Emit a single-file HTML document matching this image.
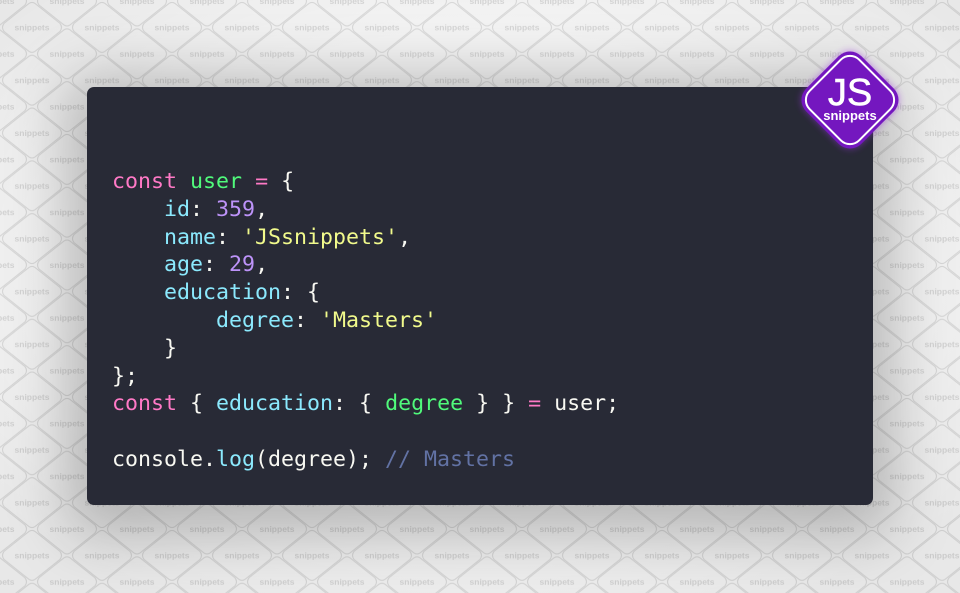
<!DOCTYPE html>
<html><head><meta charset="utf-8"><style>
html,body{margin:0;padding:0;width:960px;height:593px;overflow:hidden;background:#f2f2f2;}
#bg{position:absolute;left:0;top:0;}
.card{position:absolute;left:87px;top:87px;width:786px;height:418px;background:#282a36;border-radius:7px;box-shadow:0 10px 60px 20px rgba(0,0,0,0.25);}
pre{position:absolute;left:112px;top:168px;margin:0;font-family:"DejaVu Sans Mono","Liberation Mono",monospace;font-size:21.6px;line-height:27.8px;color:#f8f8f2;}
.k{color:#ff79c6}.g{color:#50fa7b}.c{color:#8be9fd}.n{color:#bd93f9}.s{color:#f1fa8c}.m{color:#6272a4}
#badge{position:absolute;left:788px;top:38px;}
</style></head><body>
<svg id="bg" width="960" height="593">
<defs>
<g id="d">
<path d="M0 -23 Q3 -25 6 -23 L28 -4 Q31 0 28 4 L6 23 Q3 25 0 23 L-6 23 Q-3 25 0 23 Z" fill="none"/>
<path d="M-3 -24 Q0 -26 3 -24 L28 -4 Q31 0 28 4 L3 24 Q0 26 -3 24 L-28 4 Q-31 0 -28 -4 Z" fill="none" stroke="#dadada" stroke-width="1.1"/>
<text x="0" y="3" text-anchor="middle" font-family="Liberation Sans,sans-serif" font-size="8.5" font-weight="bold" fill="#d6d6d6">snippets</text>
</g>
<pattern id="p" x="-3" y="1" width="70" height="52.8" patternUnits="userSpaceOnUse">
<use href="#d" x="35" y="26.4"/>
<use href="#d" x="0" y="0"/>
<use href="#d" x="70" y="0"/>
<use href="#d" x="0" y="52.8"/>
<use href="#d" x="70" y="52.8"/>
</pattern>
<radialGradient id="v" cx="50%" cy="45%" r="65%">
<stop offset="0.6" stop-color="#000" stop-opacity="0"/>
<stop offset="1" stop-color="#000" stop-opacity="0.05"/>
</radialGradient>
</defs>
<rect width="960" height="593" fill="#f4f4f4"/>
<rect width="960" height="593" fill="url(#p)"/>
<rect width="960" height="593" fill="url(#v)"/>
</svg>
<div class="card"></div>
<pre><span class="k">const</span> <span class="g">user</span> <span class="k">=</span> {
    <span class="c">id</span>: <span class="n">359</span>,
    <span class="c">name</span>: <span class="s">'JSsnippets'</span>,
    <span class="c">age</span>: <span class="n">29</span>,
    <span class="c">education</span>: {
        <span class="c">degree</span>: <span class="s">'Masters'</span>
    }
};
<span class="k">const</span> { <span class="c">education</span>: { <span class="g">degree</span> } } <span class="k">=</span> user;

console.<span class="c">log</span>(degree); <span class="m">// Masters</span></pre>
<svg id="badge" width="124" height="124" viewBox="0 0 124 124">
<defs><filter id="gl" x="-30%" y="-30%" width="160%" height="160%"><feGaussianBlur stdDeviation="4"/></filter></defs>
<rect x="24" y="24" width="76" height="76" rx="14" transform="rotate(45 62 62)" fill="#9b30e0" opacity="0.7" filter="url(#gl)"/>
<rect x="23" y="23" width="78" height="78" rx="16" transform="rotate(45 62 62)" fill="#7417bf"/>
<rect x="27" y="27" width="70" height="70" rx="13" transform="rotate(45 62 62)" fill="none" stroke="#fff" stroke-width="2"/>
<text x="62" y="67" text-anchor="middle" font-family="Liberation Sans,sans-serif" font-size="38" fill="#fff" stroke="#fff" stroke-width="0.6">JS</text>
<text x="62" y="82" text-anchor="middle" font-family="Liberation Sans,sans-serif" font-size="13" font-weight="bold" fill="#fff">snippets</text>
</svg>
</body></html>
